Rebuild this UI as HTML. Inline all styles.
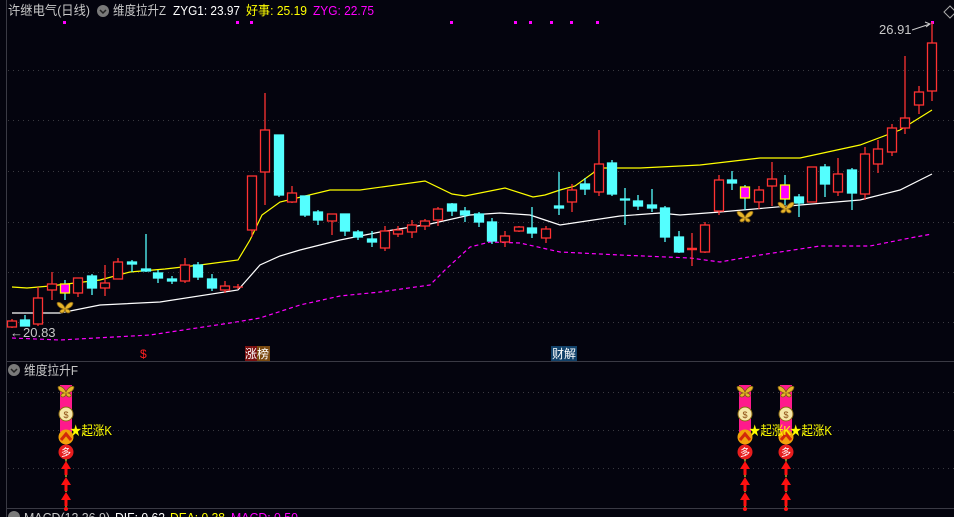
<!DOCTYPE html>
<html><head><meta charset="utf-8"><style>
html,body{margin:0;padding:0;background:#04040e;width:954px;height:517px;overflow:hidden}
svg{display:block}
text{font-family:"Liberation Sans","Noto Sans CJK SC",sans-serif}
</style></head><body>
<svg width="954" height="517" viewBox="0 0 954 517" xmlns="http://www.w3.org/2000/svg">
<defs>
<g id="bf"><path d="M0,1 C-2,-4 -7,-6 -8,-4 C-8,-1 -5,1 -2,2 C-6,3 -6,6 -3,6 C-1,6 0,4 0,2 C0,4 1,6 3,6 C6,6 6,3 2,2 C5,1 8,-1 8,-4 C7,-6 2,-4 0,1Z" fill="#e8b52a" stroke="#7a5a10" stroke-width="0.8"/></g>
<g id="col">
<rect x="-6" y="-2" width="12" height="47" fill="#ff1a8c"/>
<use href="#bf" x="0" y="4"/>
<circle cx="0" cy="27" r="7" fill="#f6e7a8" stroke="#8a6a10"/><text x="0" y="31" font-size="9" fill="#8a4a10" text-anchor="middle">$</text>
<circle cx="0" cy="50" r="7.5" fill="#f2a20a"/><path d="M-5,53 L0,47 L5,53" stroke="#d2280a" stroke-width="3" fill="none"/>
<circle cx="0" cy="65" r="7.5" fill="#e81e1e"/><text x="0" y="69" font-size="10" fill="#fff" text-anchor="middle">多</text>
<line x1="0" y1="72" x2="0" y2="122" stroke="#ffff40" stroke-dasharray="3,2"/>
<g fill="#ff1010"><path d="M0,74 L-5,82 L-1.5,82 L-1.5,88 L1.5,88 L1.5,82 L5,82Z"/><path d="M0,90 L-5,98 L-1.5,98 L-1.5,104 L1.5,104 L1.5,98 L5,98Z"/><path d="M0,105 L-5,113 L-1.5,113 L-1.5,119 L1.5,119 L1.5,113 L5,113Z"/><circle cx="0" cy="122" r="2"/></g>
</g>
</defs>
<line x1="6.5" y1="0" x2="6.5" y2="517" stroke="#3a3a44"/>
<line x1="7" y1="361.5" x2="954" y2="361.5" stroke="#3a3a44"/>
<line x1="7" y1="508.5" x2="954" y2="508.5" stroke="#3a3a44"/>
<g stroke="#3a3a40" stroke-dasharray="1,4">
<line x1="8" y1="70.5" x2="954" y2="70.5"/><line x1="8" y1="120.5" x2="954" y2="120.5"/><line x1="8" y1="171.5" x2="954" y2="171.5"/><line x1="8" y1="222.5" x2="954" y2="222.5"/><line x1="8" y1="272.5" x2="954" y2="272.5"/><line x1="8" y1="322.5" x2="954" y2="322.5"/>
<line x1="8" y1="392.5" x2="954" y2="392.5"/><line x1="8" y1="430.5" x2="954" y2="430.5"/><line x1="8" y1="468.5" x2="954" y2="468.5"/>
</g>
<text x="8" y="15" font-size="13" fill="#c8c8c8" textLength="82" lengthAdjust="spacingAndGlyphs">许继电气(日线)</text>
<circle cx="103" cy="11" r="6" fill="#7a7a7a"/><path d="M100,10 L103,13 L106,10" stroke="#222" stroke-width="1.5" fill="none"/>
<text x="113" y="15" font-size="13" fill="#c8c8c8" textLength="53" lengthAdjust="spacingAndGlyphs">维度拉升Z</text>
<text x="173" y="15" font-size="13" fill="#ffffff" textLength="67" lengthAdjust="spacingAndGlyphs">ZYG1: 23.97</text>
<text x="246" y="15" font-size="13" fill="#ffff00" textLength="61" lengthAdjust="spacingAndGlyphs">好事: 25.19</text>
<text x="313" y="15" font-size="13" fill="#ff00ff" textLength="61" lengthAdjust="spacingAndGlyphs">ZYG: 22.75</text>
<g fill="#ff00ff"><rect x="63" y="21" width="3" height="3"/><rect x="236" y="21" width="3" height="3"/><rect x="250" y="21" width="3" height="3"/><rect x="450" y="21" width="3" height="3"/><rect x="514" y="21" width="3" height="3"/><rect x="529" y="21" width="3" height="3"/><rect x="550" y="21" width="3" height="3"/><rect x="570" y="21" width="3" height="3"/><rect x="596" y="21" width="3" height="3"/><rect x="931" y="21" width="3" height="3"/></g>
<path d="M944,12 L950,6 L956,12 L950,18Z" stroke="#aaa" fill="none"/>
<text x="879" y="34" font-size="13" fill="#c8c8c8">26.91</text>
<path d="M912,30 L930,24 M925,22 L930,24 L926,27" stroke="#ccc" fill="none"/>
<text x="10" y="337" font-size="13" fill="#c8c8c8">←20.83</text>
<polyline fill="none" stroke="#ffff00" stroke-width="1.2" points="12,287 27,288 50,286 100,280 130,272 165,269 200,265 238,260 250,240 262,215 280,202 330,190 360,190 425,181 452,194 465,196 505,188 533,197 545,195 560,190 575,186 600,168 640,168 700,165 760,158 800,158 860,145 900,130 932,110"/>
<polyline fill="none" stroke="#ffffff" stroke-width="1.2" points="12,313 60,313 100,305 160,302 238,290 260,265 280,256 300,250 340,240 380,232 430,224 470,215 500,213 530,215 545,220 560,225 620,216 660,213 680,215 720,212 800,205 860,200 900,190 932,174"/>
<polyline fill="none" stroke="#ff00ff" stroke-width="1.2" stroke-dasharray="4,3" points="12,338 60,340 150,335 230,323 260,318 300,305 340,296 380,292 430,285 445,270 470,247 490,242 520,243 560,252 620,255 690,258 720,262 760,255 820,246 870,246 910,238 932,234"/>
<g stroke-width="1.3">
<g stroke="#ff3232" fill="#04040e">
<line x1="12" y1="319" x2="12" y2="328"/><rect x="7.5" y="321" width="9" height="6"/>
<line x1="38" y1="287" x2="38" y2="326"/><rect x="33.5" y="298" width="9" height="26"/>
<line x1="52" y1="272" x2="52" y2="300"/><rect x="47.5" y="284" width="9" height="6"/>
<line x1="78" y1="278" x2="78" y2="297"/><rect x="73.5" y="278" width="9" height="15"/>
<line x1="105" y1="265" x2="105" y2="296"/><rect x="100.5" y="283" width="9" height="5"/>
<line x1="118" y1="258" x2="118" y2="279"/><rect x="113.5" y="262" width="9" height="17"/>
<line x1="185" y1="258" x2="185" y2="283"/><rect x="180.5" y="265" width="9" height="16"/>
<line x1="225" y1="281" x2="225" y2="293"/><rect x="220.5" y="286" width="9" height="4"/>
<line x1="238" y1="284" x2="238" y2="289"/><line x1="233" y1="287" x2="243" y2="287"/>
<line x1="252" y1="176" x2="252" y2="237"/><rect x="247.5" y="176" width="9" height="54"/>
<line x1="265" y1="93" x2="265" y2="205"/><rect x="260.5" y="130" width="9" height="42"/>
<line x1="292" y1="186" x2="292" y2="203"/><rect x="287.5" y="193" width="9" height="9"/>
<line x1="332" y1="214" x2="332" y2="235"/><rect x="327.5" y="214" width="9" height="7"/>
<line x1="385" y1="226" x2="385" y2="251"/><rect x="380.5" y="231" width="9" height="17"/>
<line x1="398" y1="226" x2="398" y2="237"/><rect x="393.5" y="230" width="9" height="4"/>
<line x1="412" y1="220" x2="412" y2="238"/><rect x="407.5" y="225" width="9" height="7"/>
<line x1="425" y1="219" x2="425" y2="230"/><rect x="420.5" y="221" width="9" height="5"/>
<line x1="438" y1="207" x2="438" y2="226"/><rect x="433.5" y="209" width="9" height="11"/>
<line x1="505" y1="231" x2="505" y2="247"/><rect x="500.5" y="236" width="9" height="6"/>
<line x1="519" y1="226" x2="519" y2="232"/><rect x="514.5" y="227" width="9" height="4"/>
<line x1="546" y1="226" x2="546" y2="243"/><rect x="541.5" y="229" width="9" height="9"/>
<line x1="572" y1="184" x2="572" y2="212"/><rect x="567.5" y="190" width="9" height="12"/>
<line x1="599" y1="130" x2="599" y2="196"/><rect x="594.5" y="164" width="9" height="28"/>
<line x1="692" y1="233" x2="692" y2="266"/><line x1="687" y1="249" x2="697" y2="249" stroke-width="2.5"/>
<line x1="705" y1="222" x2="705" y2="253"/><rect x="700.5" y="225" width="9" height="27"/>
<line x1="719" y1="175" x2="719" y2="215"/><rect x="714.5" y="180" width="9" height="31"/>
<line x1="759" y1="186" x2="759" y2="209"/><rect x="754.5" y="190" width="9" height="12"/>
<line x1="772" y1="162" x2="772" y2="206"/><rect x="767.5" y="179" width="9" height="7"/>
<line x1="812" y1="167" x2="812" y2="202"/><rect x="807.5" y="167" width="9" height="35"/>
<line x1="838" y1="158" x2="838" y2="196"/><rect x="833.5" y="174" width="9" height="18"/>
<line x1="865" y1="147" x2="865" y2="200"/><rect x="860.5" y="154" width="9" height="40"/>
<line x1="878" y1="140" x2="878" y2="173"/><rect x="873.5" y="149" width="9" height="15"/>
<line x1="892" y1="124" x2="892" y2="156"/><rect x="887.5" y="128" width="9" height="24"/>
<line x1="905" y1="56" x2="905" y2="134"/><rect x="900.5" y="118" width="9" height="10"/>
<line x1="919" y1="86" x2="919" y2="114"/><rect x="914.5" y="92" width="9" height="13"/>
<line x1="932" y1="22" x2="932" y2="101"/><rect x="927.5" y="43" width="9" height="48"/>
</g>
<g stroke="#54ffff" fill="#54ffff">
<line x1="25" y1="315" x2="25" y2="326"/><rect x="20.5" y="320" width="9" height="6"/>
<line x1="92" y1="274" x2="92" y2="295"/><rect x="87.5" y="276" width="9" height="12"/>
<line x1="132" y1="260" x2="132" y2="272"/><rect x="127.5" y="262" width="9" height="2"/>
<line x1="146" y1="234" x2="146" y2="272"/><rect x="141.5" y="269" width="9" height="2"/>
<line x1="158" y1="270" x2="158" y2="283"/><rect x="153.5" y="273" width="9" height="5"/>
<line x1="172" y1="276" x2="172" y2="284"/><rect x="167.5" y="279" width="9" height="2"/>
<line x1="198" y1="262" x2="198" y2="280"/><rect x="193.5" y="265" width="9" height="12"/>
<line x1="212" y1="274" x2="212" y2="291"/><rect x="207.5" y="279" width="9" height="9"/>
<line x1="279" y1="135" x2="279" y2="197"/><rect x="274.5" y="135" width="9" height="60"/>
<line x1="305" y1="196" x2="305" y2="217"/><rect x="300.5" y="196" width="9" height="19"/>
<line x1="318" y1="210" x2="318" y2="225"/><rect x="313.5" y="212" width="9" height="8"/>
<line x1="345" y1="214" x2="345" y2="236"/><rect x="340.5" y="214" width="9" height="17"/>
<line x1="358" y1="230" x2="358" y2="240"/><rect x="353.5" y="232" width="9" height="5"/>
<line x1="372" y1="231" x2="372" y2="247"/><rect x="367.5" y="239" width="9" height="3"/>
<line x1="452" y1="203" x2="452" y2="216"/><rect x="447.5" y="204" width="9" height="7"/>
<line x1="465" y1="207" x2="465" y2="222"/><rect x="460.5" y="211" width="9" height="4"/>
<line x1="479" y1="212" x2="479" y2="227"/><rect x="474.5" y="214" width="9" height="8"/>
<line x1="492" y1="218" x2="492" y2="244"/><rect x="487.5" y="222" width="9" height="19"/>
<line x1="532" y1="207" x2="532" y2="238"/><rect x="527.5" y="228" width="9" height="5"/>
<line x1="559" y1="172" x2="559" y2="215"/><rect x="554.5" y="206" width="9" height="2"/>
<line x1="585" y1="178" x2="585" y2="195"/><rect x="580.5" y="184" width="9" height="5"/>
<line x1="612" y1="160" x2="612" y2="196"/><rect x="607.5" y="163" width="9" height="31"/>
<line x1="625" y1="188" x2="625" y2="225"/><rect x="620.5" y="199" width="9" height="1"/>
<line x1="638" y1="195" x2="638" y2="210"/><rect x="633.5" y="201" width="9" height="5"/>
<line x1="652" y1="189" x2="652" y2="212"/><rect x="647.5" y="205" width="9" height="3"/>
<line x1="665" y1="206" x2="665" y2="242"/><rect x="660.5" y="208" width="9" height="29"/>
<line x1="679" y1="231" x2="679" y2="253"/><rect x="674.5" y="237" width="9" height="15"/>
<line x1="732" y1="171" x2="732" y2="190"/><rect x="727.5" y="180" width="9" height="3"/>
<line x1="799" y1="194" x2="799" y2="217"/><rect x="794.5" y="197" width="9" height="6"/>
<line x1="825" y1="164" x2="825" y2="197"/><rect x="820.5" y="167" width="9" height="17"/>
<line x1="852" y1="168" x2="852" y2="210"/><rect x="847.5" y="170" width="9" height="23"/>
</g>
<g stroke="#ffff00" fill="#ff00ff">
<line x1="65" y1="280" x2="65" y2="300" stroke="#54ffff"/><rect x="60.5" y="284" width="9" height="9"/>
<line x1="745" y1="185" x2="745" y2="210" stroke="#54ffff"/><rect x="740.5" y="187" width="9" height="11"/>
<line x1="785" y1="175" x2="785" y2="205" stroke="#54ffff"/><rect x="780.5" y="185" width="9" height="14"/>
</g>
</g>
<use href="#bf" x="65" y="307"/><use href="#bf" x="745" y="216"/><use href="#bf" x="786" y="207"/>
<text x="140" y="358" font-size="12" fill="#ff2020">$</text>
<rect x="245" y="346" width="12" height="15" fill="#7a1010"/><rect x="257" y="346" width="13" height="15" fill="#7a4a10"/>
<text x="245" y="358" font-size="12" fill="#fff">涨榜</text>
<rect x="551" y="346" width="26" height="15" fill="#12426a"/>
<text x="552" y="358" font-size="12" fill="#fff">财解</text>
<circle cx="14" cy="370" r="6" fill="#7a7a7a"/><path d="M11,369 L14,372 L17,369" stroke="#222" stroke-width="1.5" fill="none"/>
<text x="24" y="375" font-size="13" fill="#c8c8c8" textLength="54" lengthAdjust="spacingAndGlyphs">维度拉升F</text>
<use href="#col" x="66" y="387"/><use href="#col" x="745" y="387"/><use href="#col" x="786" y="387"/>
<g font-size="13" fill="#ffff00"><text x="70" y="435" textLength="42" lengthAdjust="spacingAndGlyphs">★起涨K</text><text x="749" y="435" textLength="42" lengthAdjust="spacingAndGlyphs">★起涨K</text><text x="790" y="435" textLength="42" lengthAdjust="spacingAndGlyphs">★起涨K</text></g>
<circle cx="14" cy="517" r="6" fill="#7a7a7a"/>
<text x="24" y="522" font-size="13" fill="#c8c8c8" textLength="86" lengthAdjust="spacingAndGlyphs">MACD(12,26,9)</text>
<text x="115" y="522" font-size="13" fill="#fff" textLength="50" lengthAdjust="spacingAndGlyphs">DIF: 0.62</text>
<text x="170" y="522" font-size="13" fill="#ffff00" textLength="55" lengthAdjust="spacingAndGlyphs">DEA: 0.38</text>
<text x="231" y="522" font-size="13" fill="#ff00ff" textLength="67" lengthAdjust="spacingAndGlyphs">MACD: 0.50</text>
</svg>
</body></html>
